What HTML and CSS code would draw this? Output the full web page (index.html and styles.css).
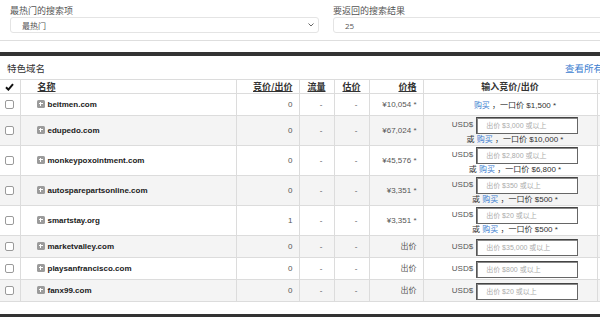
FILE: index.html
```html
<!DOCTYPE html>
<html lang="zh">
<head>
<meta charset="utf-8">
<link rel="stylesheet" href="styles.css">
</head>
<body>
<div class="page">
  <div class="filters">
    <div class="field f1">
      <div class="label">最热门的搜索项</div>
      <div class="select"><span>最热门</span><svg class="chev" width="6" height="4" viewBox="0 0 6 4"><path d="M0.5 0.5 L3 3 L5.5 0.5" fill="none" stroke="#666" stroke-width="1"/></svg></div>
    </div>
    <div class="field f2">
      <div class="label">要返回的搜索结果</div>
      <div class="textbox">25</div>
    </div>
  </div>
  <div class="band"></div>
  <div class="panel-head"><span class="title">特色域名</span><a class="all">查看所有</a></div>
  <table class="domains">
    <colgroup>
      <col class="c-check"><col class="c-name"><col class="c-bid"><col class="c-traffic"><col class="c-est"><col class="c-price"><col class="c-input"><col class="c-extra">
    </colgroup>
    <thead>
      <tr>
        <th class="chk"><svg width="9" height="8" viewBox="0 0 9 8"><path d="M1 4.2 L3.4 6.6 L8 1.2" fill="none" stroke="#111" stroke-width="2"/></svg></th>
        <th class="left name-h"><a>名称</a></th>
        <th class="right"><a>竞价/出价</a></th>
        <th class="center"><a>流量</a></th>
        <th class="center"><a>估价</a></th>
        <th class="right"><a>价格</a></th>
        <th class="center">输入竞价/出价</th>
        <th></th>
      </tr>
    </thead>
    <tbody>
      <tr>
        <td class="chk"><span class="box"></span></td>
        <td class="name"><span class="plus"></span>beitmen.com</td>
        <td class="num">0</td><td class="dash">-</td><td class="dash">-</td>
        <td class="price">¥10,054 *</td>
        <td class="bid"><div class="buy"><a>购买</a> ，一口价 $1,500 *</div></td>
        <td></td>
      </tr>
      <tr class="alt">
        <td class="chk"><span class="box"></span></td>
        <td class="name"><span class="plus"></span>edupedo.com</td>
        <td class="num">0</td><td class="dash">-</td><td class="dash">-</td>
        <td class="price">¥67,024 *</td>
        <td class="bid"><div class="offer"><span class="cur">USD$</span><span class="inp">出价 $3,000 或以上</span></div><div class="buy">或 <a>购买</a> ，一口价 $10,000 *</div></td>
        <td></td>
      </tr>
      <tr>
        <td class="chk"><span class="box"></span></td>
        <td class="name"><span class="plus"></span>monkeypoxointment.com</td>
        <td class="num">0</td><td class="dash">-</td><td class="dash">-</td>
        <td class="price">¥45,576 *</td>
        <td class="bid"><div class="offer"><span class="cur">USD$</span><span class="inp">出价 $2,800 或以上</span></div><div class="buy">或 <a>购买</a> ，一口价 $6,800 *</div></td>
        <td></td>
      </tr>
      <tr class="alt">
        <td class="chk"><span class="box"></span></td>
        <td class="name"><span class="plus"></span>autospareparts­online.com</td>
        <td class="num">0</td><td class="dash">-</td><td class="dash">-</td>
        <td class="price">¥3,351 *</td>
        <td class="bid"><div class="offer"><span class="cur">USD$</span><span class="inp">出价 $350 或以上</span></div><div class="buy">或 <a>购买</a> ，一口价 $500 *</div></td>
        <td></td>
      </tr>
      <tr>
        <td class="chk"><span class="box"></span></td>
        <td class="name"><span class="plus"></span>smartstay.org</td>
        <td class="num">1</td><td class="dash">-</td><td class="dash">-</td>
        <td class="price">¥3,351 *</td>
        <td class="bid"><div class="offer"><span class="cur">USD$</span><span class="inp">出价 $20 或以上</span></div><div class="buy">或 <a>购买</a> ，一口价 $500 *</div></td>
        <td></td>
      </tr>
      <tr class="alt">
        <td class="chk"><span class="box"></span></td>
        <td class="name"><span class="plus"></span>marketvalley.com</td>
        <td class="num">0</td><td class="dash">-</td><td class="dash">-</td>
        <td class="price">出价</td>
        <td class="bid"><div class="offer"><span class="cur">USD$</span><span class="inp">出价 $35,000 或以上</span></div></td>
        <td></td>
      </tr>
      <tr>
        <td class="chk"><span class="box"></span></td>
        <td class="name"><span class="plus"></span>playsanfrancisco.com</td>
        <td class="num">0</td><td class="dash">-</td><td class="dash">-</td>
        <td class="price">出价</td>
        <td class="bid"><div class="offer"><span class="cur">USD$</span><span class="inp">出价 $800 或以上</span></div></td>
        <td></td>
      </tr>
      <tr class="alt">
        <td class="chk"><span class="box"></span></td>
        <td class="name"><span class="plus"></span>fanx99.com</td>
        <td class="num">0</td><td class="dash">-</td><td class="dash">-</td>
        <td class="price">出价</td>
        <td class="bid"><div class="offer"><span class="cur">USD$</span><span class="inp">出价 $20 或以上</span></div></td>
        <td></td>
      </tr>
    </tbody>
  </table>
  <div class="band bottom"></div>
</div>
</body>
</html>
```
FILE: styles.css
```css
* { box-sizing: border-box; margin: 0; padding: 0; }
html, body { background: #fff; }
body {
  margin: 0;
  width: 600px;
  height: 317px;
  overflow: hidden;
  font-family: "Liberation Sans", "Noto Sans CJK SC", sans-serif;
  color: #333;
}
.page { width: 630px; }

.filters {
  display: flex;
  gap: 14px;
  height: 41px;
  padding: 5px 0 0 10px;
  border-bottom: 1px solid #dedede;
}
.field .label {
  font-family: "Noto Sans CJK SC", sans-serif;
  font-size: 9px;
  line-height: 12px;
  height: 12px;
  color: #555;
}
.f1 { width: 312px; }
.f2 { width: 300px; }
.select, .textbox {
  height: 16px;
  border: 1px solid #e4e4e4;
  border-radius: 3px;
  display: flex;
  align-items: center;
  font-size: 8px;
  color: #555;
}
.select {
  justify-content: space-between;
  padding: 0 4px 0 11px;
  font-family: "Noto Sans CJK SC", sans-serif;
}
.textbox { padding-left: 11px; font-family: "Open Sans", sans-serif; }

.band { height: 4px; background: #333; margin-top: 11px; }
.band.bottom { margin-top: 12px; }

.panel-head {
  height: 23px;
  display: flex;
  align-items: center;
  justify-content: space-between;
  padding: 0 27px 0 7px;
  font-family: "Noto Sans CJK SC", sans-serif;
  font-size: 9.5px;
}
.panel-head .title { color: #333; }
.panel-head .all { color: #3b7dd0; }

.domains {
  width: 630px;
  table-layout: fixed;
  border-collapse: collapse;
  font-size: 8px;
}
.c-check { width: 20px; }
.c-name { width: 216px; }
.c-bid { width: 63px; }
.c-traffic { width: 35px; }
.c-est { width: 35px; }
.c-price { width: 54px; }
.c-input { width: 174px; }
.c-extra { width: 33px; }

.domains th, .domains td {
  border: 1px solid #dcdcdc;
  vertical-align: middle;
}
.domains tr > :first-child { border-left: none; }
.domains th {
  height: 14px;
  padding: 0 6px;
  font-family: "Noto Sans CJK SC", sans-serif;
  font-size: 9px;
  line-height: 11px;
  font-weight: bold;
  color: #333;
}
.domains th a { text-decoration: underline; color: #333; }
.domains th.chk { padding: 0; text-align: center; }
.domains th.chk svg { display: block; margin: 0 auto; }
.left { text-align: left; }
.right { text-align: right; }
.center { text-align: center; }
.name-h { padding-left: 17px !important; }

.domains td {
  height: 22px;
  padding: 1px 6px;
  line-height: 10px;
  color: #555;
}
.domains tr.alt td { background: #f4f4f4; }
.domains td.chk { padding: 0; text-align: center; }
.box {
  display: block;
  width: 9px;
  height: 9px;
  margin: 0 auto;
  border: 1px solid #9a9a9a;
  border-radius: 2px;
  background: #fff;
}
.domains td.name {
  padding-left: 16px;
  font-weight: bold;
  color: #1a1a1a;
}
.plus {
  display: inline-block;
  width: 8px;
  height: 8px;
  margin-right: 3px;
  vertical-align: -1px;
  border-radius: 1.5px;
  background:
    linear-gradient(#fff, #fff) center / 4px 1px no-repeat,
    linear-gradient(#fff, #fff) center / 1px 4px no-repeat,
    #9b9b9b;
}
.domains td.num { text-align: right; }
.domains td.dash { text-align: right; padding-right: 11px; }
.domains td.price { text-align: right; }

.domains td.bid { text-align: center; padding: 1px 0 0 10px; }
.offer {
  display: flex;
  justify-content: center;
  align-items: flex-start;
  gap: 3px;
}
.cur { font-size: 8px; line-height: 10px; color: #555; padding-top: 3px; }
.inp {
  width: 102px;
  height: 17px;
  border: 1px solid #666;
  border-top-color: #444;
  border-left-color: #555;
  box-shadow: inset 1px 1px 0 #888;
  background: #fff;
  color: #aaa;
  font-size: 7px;
  line-height: 15px;
  padding-left: 9px;
  text-align: left;
}
.buy {
  font-size: 8px;
  line-height: 11px;
  color: #333;
}
.buy a { color: #3b7dd0; }
```
